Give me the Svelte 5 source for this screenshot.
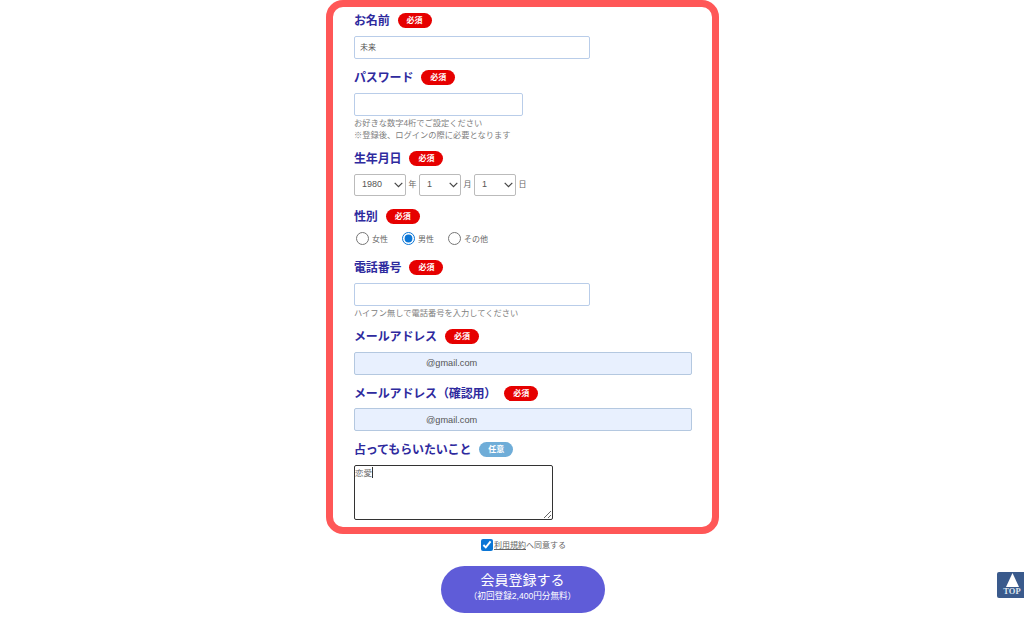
<script>
  let name = $state('未来');
  let gender = $state('male');
  let agreed = $state(true);
  let wish = $state('恋愛');
</script>

<div class="page">
  <form class="card">
    <div class="label first"><span>お名前</span><em>必須</em></div>
    <input class="text wide" type="text" bind:value={name} />

    <div class="label l-pass"><span>パスワード</span><em>必須</em></div>
    <input class="text short" type="text" />
    <p class="note n1">お好きな数字4桁でご設定ください<br />※登録後、ログインの際に必要となります</p>

    <div class="label l-birth"><span>生年月日</span><em>必須</em></div>
    <div class="dates">
      <select class="y"><option>1980</option></select><span>年</span>
      <select class="d"><option>1</option></select><span>月</span>
      <select class="d"><option>1</option></select><span>日</span>
    </div>

    <div class="label l-gender"><span>性別</span><em>必須</em></div>
    <div class="radios">
      <label><input type="radio" bind:group={gender} value="female" />女性</label>
      <label><input type="radio" bind:group={gender} value="male" />男性</label>
      <label><input type="radio" bind:group={gender} value="other" />その他</label>
    </div>

    <div class="label l-tel"><span>電話番号</span><em>必須</em></div>
    <input class="text wide" type="text" />
    <p class="note n2">ハイフン無しで電話番号を入力してください</p>

    <div class="label l-mail"><span>メールアドレス</span><em>必須</em></div>
    <input class="text full" type="text" value="@gmail.com" />

    <div class="label l-mail2"><span>メールアドレス（確認用）</span><em>必須</em></div>
    <input class="text full confirm" type="text" value="@gmail.com" />

    <div class="label l-wish"><span>占ってもらいたいこと</span><em class="opt">任意</em></div>
    <div class="wish">
      <textarea bind:value={wish}></textarea>
      <i class="caret"></i>
    </div>
  </form>

  <label class="agree"><input type="checkbox" bind:checked={agreed} /><span><u>利用規約</u>へ同意する</span></label>

  <button class="submit" type="button">
    <b>会員登録する</b>
    <small>（初回登録2,400円分無料）</small>
  </button>
</div>

<a class="top" href="#top">
  <svg width="13" height="14" viewBox="0 0 13 14"><path d="M6.5 0 13 14H0z" fill="#fff" /></svg>
  <span>TOP</span>
</a>

<style>
  :global(body) {
    background: #fff;
    color: #666;
    font-family: "Liberation Sans", "Noto Sans CJK JP", sans-serif;
    font-size: 8px;
  }
  .page {
    width: 393px;
    margin-left: 326px;
  }
  .card {
    box-sizing: border-box;
    height: 534px;
    padding: 0 20px 0 21px;
    border: 7px solid #ff5757;
    border-radius: 17px;
    overflow: hidden;
  }
  .label {
    display: flex;
    align-items: center;
    height: 16px;
    color: #2e2a9e;
    font-size: 12px;
    font-weight: bold;
    letter-spacing: -0.15px;
  }
  .label span {
    padding-bottom: 2px;
  }
  .label em {
    width: 34px;
    height: 15px;
    margin-left: 8px;
    border-radius: 8px;
    background: #e60000;
    color: #fff;
    font-size: 8px;
    font-style: normal;
    letter-spacing: 0;
    line-height: 15px;
    text-align: center;
  }
  .label em.opt {
    background: #6fadd8;
  }
  .first { margin-top: 5px; }
  .l-pass { margin-top: 10px; }
  .l-birth { margin-top: 8px; }
  .l-gender { margin-top: 12px; }
  .l-tel { margin-top: 13px; }
  .l-mail { margin-top: 8px; }
  .l-mail2 { margin-top: 10px; }
  .l-wish { margin-top: 10px; }
  .text {
    display: block;
    box-sizing: border-box;
    height: 23px;
    margin-top: 8px;
    padding: 0 5px 2px;
    border: 1.5px solid #b9cde9;
    border-radius: 2px;
    background: #fff;
    color: #555;
    font: inherit;
    outline: none;
  }
  .wide { width: 236px; }
  .short { width: 169px; }
  .full {
    width: 338px;
    padding-left: 71px;
    border-color: #b4c8e0;
    background: #e8f0fe;
    font-size: 9.2px;
  }
  .confirm {
    margin-top: 7px;
    padding-bottom: 0;
  }
  .note {
    margin: 2px 0 0;
    color: #808080;
    font-size: 8.25px;
    line-height: 12px;
  }
  .dates {
    display: flex;
    align-items: center;
    gap: 2.5px;
    margin-top: 8px;
    color: #666;
  }
  .dates span {
    padding-bottom: 3px;
  }
  .dates select {
    appearance: none;
    box-sizing: border-box;
    height: 22px;
    padding: 0 0 2px 7px;
    border: 1px solid #bbb;
    border-radius: 2px;
    background: #fff url("data:image/svg+xml,%3Csvg xmlns='http://www.w3.org/2000/svg' width='9' height='6' viewBox='0 0 9 6'%3E%3Cpath d='M.7.9 4.5 4.7 8.3.9' fill='none' stroke='%23444' stroke-width='1.2'/%3E%3C/svg%3E") no-repeat right 2.5px center;
    color: #555;
    font-family: inherit;
    font-size: 9px;
  }
  .dates .y { width: 52px; }
  .dates .d { width: 42px; }
  .radios {
    display: flex;
    gap: 14px;
    margin-top: 6px;
    margin-left: 2px;
    height: 16px;
    align-items: center;
  }
  .radios label {
    display: flex;
    align-items: center;
    gap: 3px;
  }
  .radios input {
    width: 13px;
    height: 13px;
    margin: 0;
    accent-color: #0b76d6;
  }
  .wish {
    position: relative;
    width: 199px;
    margin-top: 8px;
  }
  textarea {
    display: block;
    box-sizing: border-box;
    width: 199px;
    height: 55px;
    padding: 0;
    border: 1.5px solid #333;
    border-radius: 2px;
    color: #666;
    font: inherit;
    font-size: 8.5px;
    outline: none;
  }
  .caret {
    position: absolute;
    left: 18px;
    top: 2px;
    width: 1px;
    height: 11px;
    background: #333;
  }
  .agree {
    display: flex;
    align-items: center;
    justify-content: center;
    gap: 1px;
    height: 14px;
    margin: 4px 0 0 2px;
    color: #666;
  }
  .agree span {
    padding-bottom: 2px;
  }
  .agree input {
    width: 12px;
    height: 12px;
    margin: 0;
    accent-color: #0b76d6;
  }
  .submit {
    display: block;
    box-sizing: border-box;
    width: 164px;
    height: 47px;
    margin: 14px auto 0;
    padding: 0 0 8px;
    border: none;
    border-radius: 24px;
    background: #5f5cd8;
    color: #fff;
    font-family: inherit;
  }
  .submit b {
    display: block;
    font-size: 14px;
    font-weight: normal;
    line-height: 20px;
  }
  .submit small {
    display: block;
    margin-top: 1px;
    font-size: 8.6px;
    line-height: 11px;
  }
  .top {
    position: fixed;
    right: 0;
    top: 572px;
    display: flex;
    flex-direction: column;
    align-items: center;
    box-sizing: border-box;
    width: 27px;
    height: 26px;
    padding: 1px 0 0 3px;
    border-radius: 2px 0 0 2px;
    background: #3a5a8c;
    color: #dfe6f0;
    font-family: "Liberation Serif", serif;
    font-size: 8.5px;
    font-weight: bold;
    line-height: 9px;
    text-decoration: none;
  }
</style>
